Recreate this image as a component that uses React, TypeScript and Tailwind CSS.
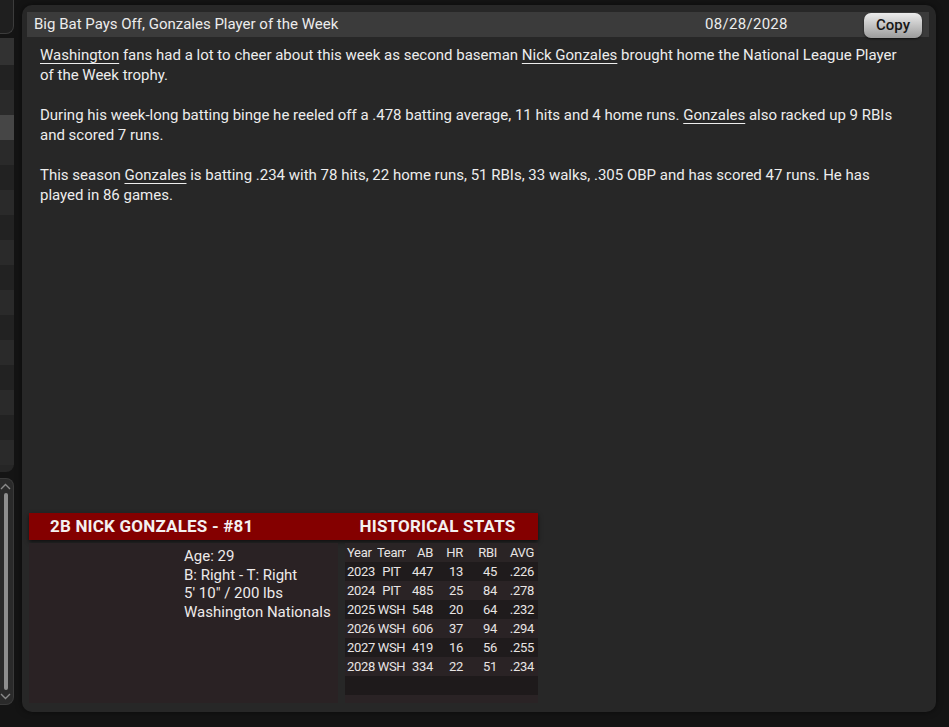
import React from "react";

const font = { fontFamily: "Roboto, 'Liberation Sans', sans-serif" };

const stats = [
  { year: "2023", team: "PIT", ab: 447, hr: 13, rbi: 45, avg: ".226" },
  { year: "2024", team: "PIT", ab: 485, hr: 25, rbi: 84, avg: ".278" },
  { year: "2025", team: "WSH", ab: 548, hr: 20, rbi: 64, avg: ".232" },
  { year: "2026", team: "WSH", ab: 606, hr: 37, rbi: 94, avg: ".294" },
  { year: "2027", team: "WSH", ab: 419, hr: 16, rbi: 56, avg: ".255" },
  { year: "2028", team: "WSH", ab: 334, hr: 22, rbi: 51, avg: ".234" },
];

// sidebar list rows (only a sliver of it is visible)
const sideRows = Array.from({ length: 16 }, (_, i) => i);

function Link({ children }: { children: React.ReactNode }) {
  return <span className="underline decoration-1 underline-offset-[3px]">{children}</span>;
}

function Sidebar() {
  return (
    <div className="flex w-[14px] shrink-0 flex-col">
      <div className="h-[34px] rounded-br-[8px] border-r border-b border-[#3c3c3c] bg-[#1f1f1f]" />
      <div className="mt-[4px] flex h-[434px] flex-col overflow-hidden rounded-br-[8px] bg-[#262626]">
        <div className="h-[27px] shrink-0 bg-[#323232]" />
        {sideRows.map((i) => (
          <div
            key={i}
            className={
              i === 2
                ? "h-[25px] shrink-0 bg-[#464646]"
                : i % 2 === 0
                  ? "h-[25px] shrink-0 bg-[#222222]"
                  : "h-[25px] shrink-0 bg-[#2a2a2a]"
            }
          />
        ))}
      </div>
      <div className="mt-[6px] flex h-[227px] flex-col items-center rounded-r-[8px] border-r border-t border-b border-[#3a3a3a] bg-[#2a2a2a] py-[4px] pr-[2px]">
        <svg width="11" height="7" viewBox="0 0 11 7" className="shrink-0">
          <path d="M1 6 L5.5 1.5 L10 6" fill="none" stroke="#8a8a8a" strokeWidth="1.4" />
        </svg>
        <div className="my-[3px] w-[4px] flex-1 rounded-full bg-[#8e8e8e]" />
        <svg width="11" height="7" viewBox="0 0 11 7" className="shrink-0">
          <path d="M1 1 L5.5 5.5 L10 1" fill="none" stroke="#8a8a8a" strokeWidth="1.4" />
        </svg>
      </div>
    </div>
  );
}

function StatsTable() {
  const cell = "h-[19px] flex items-center";
  return (
    <div className="flex w-[193px] flex-col bg-[#2a2325] text-[13px] tracking-[-0.3px] text-[#e8e4e4]">
      <div className={`${cell} bg-[#2a2425]`}>
        <span className="w-[32px] pl-[2px]">Year</span>
        <span className="w-[29px] overflow-hidden whitespace-nowrap">Team</span>
        <span className="w-[27px] text-right">AB</span>
        <span className="w-[30px] text-right">HR</span>
        <span className="w-[34px] text-right">RBI</span>
        <span className="w-[37px] text-right">AVG</span>
      </div>
      {stats.map((s, i) => (
        <div key={s.year} className={`${cell} ${i % 2 === 0 ? "bg-[#1f1b1c]" : "bg-[#2a2325]"}`}>
          <span className="w-[32px] pl-[2px]">{s.year}</span>
          <span className="w-[29px] text-center">{s.team}</span>
          <span className="w-[27px] text-right">{s.ab}</span>
          <span className="w-[30px] text-right">{s.hr}</span>
          <span className="w-[34px] text-right">{s.rbi}</span>
          <span className="w-[37px] text-right">{s.avg}</span>
        </div>
      ))}
      <div className="h-[19px] bg-[#1e1a1b]" />
      <div className="flex-1 bg-[#2a2325]" />
    </div>
  );
}

function PlayerCard() {
  return (
    <div className="mt-auto ml-[2px] flex flex-col">
      <div className="flex h-[27px] w-[509px] items-center bg-[#840000] text-[17px] font-bold tracking-[0.2px] text-[#f4f0f0] shadow-[0_2px_4px_rgba(0,0,0,0.6)]">
        <div className="w-[316px] pl-[21px]">2B NICK GONZALES - #81</div>
        <div className="w-[193px] pr-[8px] text-center">HISTORICAL STATS</div>
      </div>
      <div className="mt-[3px] flex h-[160px] gap-[7px]">
        <div className="w-[309px] bg-[#2a2224] pl-[155px] pt-[4px] text-[15px] leading-[18.5px] text-[#eeeaea]">
          <div>Age: 29</div>
          <div>B: Right - T: Right</div>
          <div>5' 10" / 200 lbs</div>
          <div>Washington Nationals</div>
        </div>
        <StatsTable />
      </div>
    </div>
  );
}

export default function App() {
  return (
    <div className="flex h-[727px] w-[949px] overflow-hidden bg-[#141414]" style={font}>
      <Sidebar />
      <div className="ml-[8px] mt-[5px] flex h-[707px] w-[914px] flex-col rounded-[10px] bg-[#272727] pt-[7px] pr-[7px] pb-[9px] pl-[5px] shadow-[0_0_6px_rgba(0,0,0,0.5)]">
        {/* Header */}
        <div className="flex h-[25px] shrink-0 items-center bg-[#3b3b3b] pl-[7px] pr-[7px] text-[15px] text-[#ececec]">
          <div className="flex-1">Big Bat Pays Off, Gonzales Player of the Week</div>
          <div className="w-[83px] tracking-[0.3px]">08/28/2028</div>
          <button className="ml-[76px] mt-[2px] h-[25px] w-[58px] rounded-[7px] bg-gradient-to-b from-[#ececec] to-[#9c9c9c] text-[15px] font-medium text-[#161616] shadow-[0_1px_2px_rgba(0,0,0,0.6)]">
            Copy
          </button>
        </div>

        {/* Article */}
        <div className="mt-[8px] w-[875px] pl-[13px] text-[15px] leading-[20px] text-[#ededed]">
          <p>
            <Link>Washington</Link> fans had a lot to cheer about this week as second baseman{" "}
            <Link>Nick Gonzales</Link> brought home the National League Player of the Week trophy.
          </p>
          <p className="mt-[20px]">
            During his week-long batting binge he reeled off a .478 batting average, 11 hits and 4 home runs.{" "}
            <Link>Gonzales</Link> also racked up 9 RBIs and scored 7 runs.
          </p>
          <p className="mt-[20px]">
            This season <Link>Gonzales</Link> is batting .234 with 78 hits, 22 home runs, 51 RBIs, 33 walks, .305
            OBP and has scored 47 runs. He has played in 86 games.
          </p>
        </div>

        <PlayerCard />
      </div>
    </div>
  );
}
